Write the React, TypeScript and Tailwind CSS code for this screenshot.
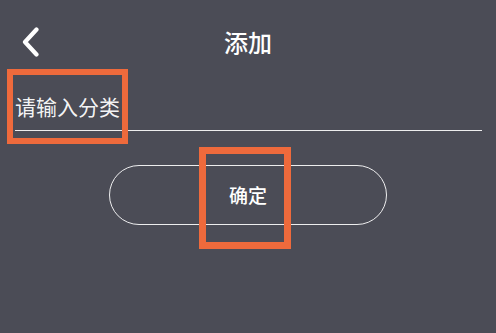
export default function App() {
  return (
    <div
      className="relative h-[333px] w-[496px] overflow-hidden bg-[#4b4c56] text-white"
      style={{ fontFamily: '"Noto Sans CJK SC", "Noto Sans", sans-serif' }}
    >
      {/* 顶栏 */}
      <header className="grid h-[30px] grid-cols-[1fr_auto_1fr] items-center mt-[27px] px-[22px]">
        <button type="button" className="flex h-[30px] w-[20px] items-center">
          <svg width="18" height="30" viewBox="0 0 18 30" fill="none">
            <path
              d="M14.5 2.5 L3 15 L14.5 27.5"
              stroke="white"
              strokeWidth="4.2"
              strokeLinecap="round"
              strokeLinejoin="round"
            />
          </svg>
        </button>
        <h1 className="text-[24px] leading-[30px] font-medium">添加</h1>
        <div />
      </header>

      {/* 输入框 */}
      <div className="mt-[35px] ml-[15px] mr-[14px] border-b-[1.5px] border-white/90 pb-[10px]">
        <div className="text-[21px] leading-[28px] text-white/95">请输入分类</div>
      </div>

      {/* 按钮 */}
      <button
        type="button"
        className="mx-auto mt-[34px] flex h-[60px] w-[278px] items-center justify-center rounded-full border-[1.5px] border-white/90 text-[19px] font-medium"
      >
        确定
      </button>

      {/* 标注框 */}
      <div className="absolute left-[7px] top-[69px] h-[75px] w-[121px] border-[6px] border-[#ee6a3c]" />
      <div className="absolute left-[199px] top-[147px] h-[102px] w-[92px] border-[7px] border-[#ee6a3c]" />
    </div>
  );
}
